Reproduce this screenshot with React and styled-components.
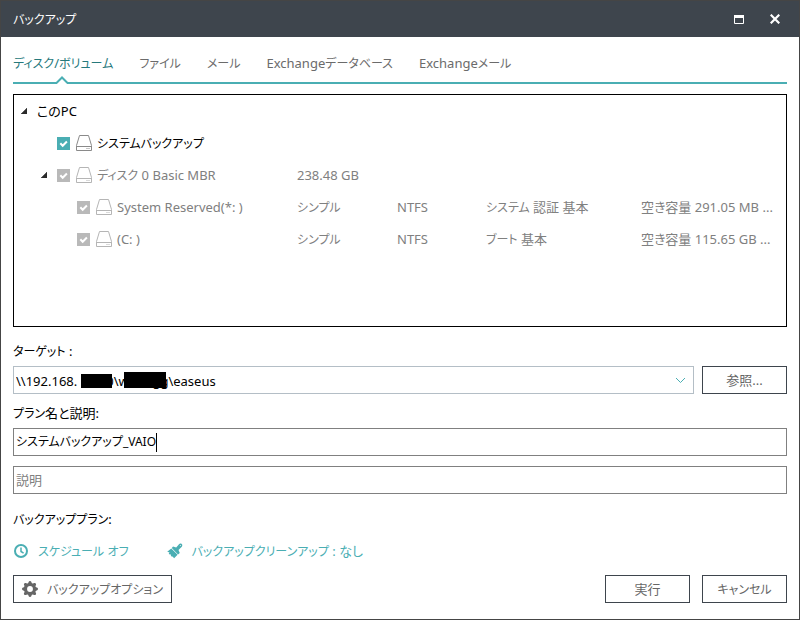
import React from 'react';
import styled, { createGlobalStyle } from 'styled-components';
import { BsGearFill } from 'react-icons/bs';

const GlobalStyle = createGlobalStyle`
  * {
    box-sizing: border-box;
  }

  body {
    margin: 0;
    background: #ffffff;
  }

  body, button, input, select {
    font-family: 'Noto Sans', 'Noto Sans CJK JP', sans-serif;
    font-size: 13px;
    line-height: 20px;
    font-feature-settings: 'palt';
  }
`;

const Window = styled.div`
  min-height: 100vh;
  display: flex;
  flex-direction: column;
  border: 1px solid #454545;
  background: #ffffff;
  color: #000000;
`;

const TitleBar = styled.header`
  height: 36px;
  padding: 0 12px;
  display: flex;
  align-items: center;
  background: #3e454d;
  color: #ffffff;
`;

const WindowTitle = styled.h1`
  margin: 0;
  flex: 1;
  font-size: 13px;
  font-weight: 400;
`;

const WindowButton = styled.button`
  width: 24px;
  height: 24px;
  margin-left: 12px;
  padding: 0;
  display: flex;
  align-items: center;
  justify-content: center;
  border: 0;
  background: transparent;
`;

const Content = styled.main`
  flex: 1;
  padding: 0 12px 16px;
  display: flex;
  flex-direction: column;
`;

const Tabs = styled.nav`
  height: 47px;
  padding-top: 16px;
  display: flex;
  gap: 26px;
  border-bottom: 2px solid #4aaeb3;
`;

const Tab = styled.button`
  position: relative;
  height: 20px;
  padding: 0;
  border: 0;
  background: transparent;
  color: ${props => (props.$active ? '#26797c' : '#6b6b6b')};
  white-space: nowrap;
`;

const Notch = styled.svg`
  position: absolute;
  left: calc(50% - 8px);
  top: 23px;
`;

const Kana = styled.span`
  font-size: 12px;
  line-height: 1;
`;

const Tree = styled.section`
  flex: 1;
  margin-top: 10px;
  border: 1px solid #000000;
`;

const TreeTable = styled.table`
  width: 100%;
  table-layout: fixed;
  border-collapse: collapse;
`;

const Column = styled.col`
  width: ${props => props.$width};
`;

const Row = styled.tr`
  height: 32px;
  color: ${props => (props.$muted ? '#808080' : '#000000')};
`;

const Cell = styled.td`
  padding: 0;
  white-space: nowrap;
`;

const NameCell = styled.div`
  display: flex;
  align-items: center;
  padding-left: ${props => 7 + props.$level * 20}px;
`;

const Expander = styled.button`
  width: 16px;
  height: 16px;
  padding: 0;
  display: flex;
  align-items: center;
  border: 0;
  background: transparent;
`;

const ExpanderSpace = styled.span`
  width: 16px;
`;

const CheckLabel = styled.label`
  display: flex;
  align-items: center;
  gap: 5px;
`;

const Checkbox = styled.input`
  appearance: none;
  width: 13px;
  height: 13px;
  margin: 0 1px 0 0;
  background: ${props => (props.disabled ? '#b9b9b9' : '#4aaeb3')}
    url("data:image/svg+xml,%3Csvg xmlns='http://www.w3.org/2000/svg' viewBox='0 0 13 13'%3E%3Cpath d='M3.3 6.2l2.4 2.5 4.2-4.2' fill='none' stroke='white' stroke-width='2'/%3E%3C/svg%3E");
`;

const FieldLabel = styled.label`
  display: block;
  margin-top: ${props => (props.$first ? 14 : 9)}px;
  margin-bottom: 5px;
`;

const TargetRow = styled.div`
  display: flex;
  gap: 8px;
`;

const SelectBox = styled.div`
  position: relative;
  flex: 1;
`;

const Select = styled.select`
  appearance: none;
  width: 100%;
  height: 28px;
  padding: 1px 30px 0 2px;
  border: 1px solid #b4bec6;
  border-radius: 0;
  background: #ffffff;
  color: #000000;
`;

const Chevron = styled.svg`
  position: absolute;
  right: 8px;
  top: 11px;
  pointer-events: none;
`;

// Black bars over the private parts of the network path
const Redaction = styled.span`
  position: absolute;
  left: ${props => props.$left}px;
  top: ${props => props.$top}px;
  width: ${props => props.$width}px;
  height: ${props => props.$height}px;
  background: #000000;
`;

const Button = styled.button`
  min-width: 85px;
  height: 28px;
  padding: 0 8px;
  display: flex;
  align-items: center;
  justify-content: center;
  gap: 9px;
  border: 1px solid #3e454d;
  background: #ffffff;
  color: #666666;
`;

const TextField = styled.div`
  height: 28px;
  padding: 0 2px;
  display: flex;
  align-items: center;
  border: 1px solid #808080;

  & + & {
    margin-top: 10px;
  }
`;

const TextInput = styled.input`
  ${props => (props.$fit ? 'field-sizing: content; font-size: 12px;' : 'flex: 1;')}
  min-width: 0;
  padding: 0;
  border: 0;
  outline: 0;
  background: transparent;
  color: #000000;

  &::placeholder {
    color: #808080;
  }
`;

const Caret = styled.span`
  width: 1px;
  height: 19px;
  background: #000000;
`;

const PlanLabel = styled.p`
  margin: 15px 0 12px;
`;

const PlanLinks = styled.div`
  display: flex;
  gap: 38px;
`;

const PlanLink = styled.a`
  display: flex;
  align-items: center;
  gap: 9px;
  color: #4aaeb3;
  text-decoration: none;
`;

const Footer = styled.footer`
  margin-top: 14px;
  display: flex;
  gap: 12px;
`;

const Spacer = styled.span`
  flex: 1;
`;

const tabs = ['ディスク/ボリューム', 'ファイル', 'メール', 'Exchangeデータベース', 'Exchangeメール'];

const columns = ['283px', '100px', '89px', '155px', 'auto'];

const rows = [
  { level: 0, name: 'このPC', open: true },
  { level: 1, name: 'システムバックアップ', check: true },
  { level: 1, name: 'ディスク 0 Basic MBR', open: true, check: true, muted: true, cells: ['238.48 GB'] },
  {
    level: 2,
    name: 'System Reserved(*: )',
    check: true,
    muted: true,
    cells: ['シンプル', 'NTFS', 'システム 認証 基本', '空き容量 291.05 MB ...'],
  },
  {
    level: 2,
    name: '(C: )',
    check: true,
    muted: true,
    cells: ['シンプル', 'NTFS', 'ブート 基本', '空き容量 115.65 GB ...'],
  },
];

// Katakana is set one size smaller than the kanji and latin around it
const Text = ({ children }) => (
  <span>
    {children.split(/([ァ-ヶー]+)/).map((part, i) => (i % 2 ? <Kana key={i}>{part}</Kana> : part))}
  </span>
);

const DriveIcon = ({ muted }) => (
  <svg width="16" height="16" viewBox="0 0 16 16" fill="none" stroke={muted ? '#b5b5b5' : '#8a8a8a'}>
    <path d="M3.5 .5h9l3 10v5H.5v-5zM.5 11.5h15" />
    <path d="M10.5 13.5h1M12.5 13.5h1" />
  </svg>
);

const ClockIcon = () => (
  <svg width="16" height="16" viewBox="0 0 16 16" fill="none" stroke="#4aaeb3" strokeWidth="2">
    <circle cx="8" cy="8" r="6" />
    <path d="M8 4.5V8.5l2.6 1.6" strokeWidth="1.5" />
  </svg>
);

const BrushIcon = () => (
  <svg width="16" height="16" viewBox="0 0 16 16" fill="#4aaeb3">
    <path d="M6 3.400L9.200 4.600l2.800-3.400c.6-.8 1.900-.9 2.700-.2.8.7.8 2 .1 2.700L11.500 7l1.300 3-1.800 1.400-6.200-6.400z" />
    <path d="M4.300 5.400l6.300 6.400-3.500 3.500-1.700-2-.3.800-1.300-1.700.2-1-1.400.2-.9-1.400 1-.6L.2 8.700z" />
    <circle cx="13.300" cy="2.500" r=".5" fill="#ffffff" />
  </svg>
);

const TreeRow = ({ row }) => {
  const name = (
    <>
      {row.check && <DriveIcon muted={row.muted} />}
      <Text>{row.name}</Text>
    </>
  );

  return (
    <Row $muted={row.muted}>
      <Cell>
        <NameCell $level={row.level}>
          {row.open ? (
            <Expander type="button" aria-label={`${row.name} を折りたたむ`}>
              <svg width="6" height="6" viewBox="0 0 6 6">
                <path d="M6 0v6H0z" fill="#2b2b2b" stroke="#2b2b2b" strokeWidth=".5" />
              </svg>
            </Expander>
          ) : (
            <ExpanderSpace />
          )}
          {row.check ? (
            <CheckLabel>
              <Checkbox type="checkbox" defaultChecked disabled={row.muted} />
              {name}
            </CheckLabel>
          ) : (
            name
          )}
        </NameCell>
      </Cell>
      {[0, 1, 2, 3].map(i => (
        <Cell key={i}>{row.cells?.[i] && <Text>{row.cells[i]}</Text>}</Cell>
      ))}
    </Row>
  );
};

const App = () => {
  return (
    <>
      <GlobalStyle />
      <Window>
        <TitleBar>
          <WindowTitle>
            <Text>バックアップ</Text>
          </WindowTitle>
          <WindowButton type="button" aria-label="最大化">
            <svg width="10" height="9" viewBox="0 0 10 9">
              <path d="M.5 .5h9v8h-9z" fill="none" stroke="#ffffff" />
              <path d="M0 0h10v3H0z" fill="#ffffff" />
            </svg>
          </WindowButton>
          <WindowButton type="button" aria-label="閉じる">
            <svg width="10" height="10" viewBox="0 0 10 10">
              <path d="M.7 .7l8.600 8.600M9.300 .7L.7 9.300" stroke="#ffffff" strokeWidth="2.200" />
            </svg>
          </WindowButton>
        </TitleBar>
        <Content>
          <Tabs>
            {tabs.map((tab, index) => (
              <Tab key={tab} type="button" $active={index === 0}>
                <Text>{tab}</Text>
                {index === 0 && (
                  <Notch width="14" height="9" viewBox="0 0 14 9">
                    <path d="M1 6l6-6 6 6v3H1z" fill="#ffffff" />
                    <path d="M0 7h1.500L7 1.500 12.500 7H14" fill="none" stroke="#4aaeb3" strokeWidth="2" />
                  </Notch>
                )}
              </Tab>
            ))}
          </Tabs>

          <Tree>
            <TreeTable>
              <colgroup>
                {columns.map((width, index) => (
                  <Column key={index} $width={width} />
                ))}
              </colgroup>
              <tbody>
                {rows.map(row => (
                  <TreeRow key={row.name} row={row} />
                ))}
              </tbody>
            </TreeTable>
          </Tree>

          <FieldLabel htmlFor="target" $first>
            <Text>ターゲット :</Text>
          </FieldLabel>
          <TargetRow>
            <SelectBox>
              <Select id="target">
                <option>{'\\\\192.168.\u00a0\u00a00000\\wooogg\\easeus'}</option>
              </Select>
              <Redaction $left={68} $top={8} $width={31} $height={14} />
              <Redaction $left={111} $top={6} $width={42} $height={16} />
              <Chevron width="11" height="7" viewBox="0 0 11 7">
                <path d="M1 1l4.500 4.500L10 1" fill="none" stroke="#4aaeb3" />
              </Chevron>
            </SelectBox>
            <Button type="button">参照...</Button>
          </TargetRow>

          <FieldLabel htmlFor="plan-name">
            <Text>プラン名と説明:</Text>
          </FieldLabel>
          <TextField>
            <TextInput id="plan-name" $fit defaultValue="システムバックアップ_VAIO" />
            <Caret />
          </TextField>
          <TextField>
            <TextInput placeholder="説明" aria-label="説明" />
          </TextField>

          <PlanLabel>
            <Text>バックアッププラン:</Text>
          </PlanLabel>
          <PlanLinks>
            <PlanLink href="#schedule">
              <ClockIcon />
              <Text>スケジュール オフ</Text>
            </PlanLink>
            <PlanLink href="#cleanup">
              <BrushIcon />
              <Text>バックアップクリーンアップ : なし</Text>
            </PlanLink>
          </PlanLinks>

          <Footer>
            <Button type="button">
              <BsGearFill size={16} />
              <Text>バックアップオプション</Text>
            </Button>
            <Spacer />
            <Button type="button">実行</Button>
            <Button type="button">
              <Text>キャンセル</Text>
            </Button>
          </Footer>
        </Content>
      </Window>
    </>
  );
};

export default App;
